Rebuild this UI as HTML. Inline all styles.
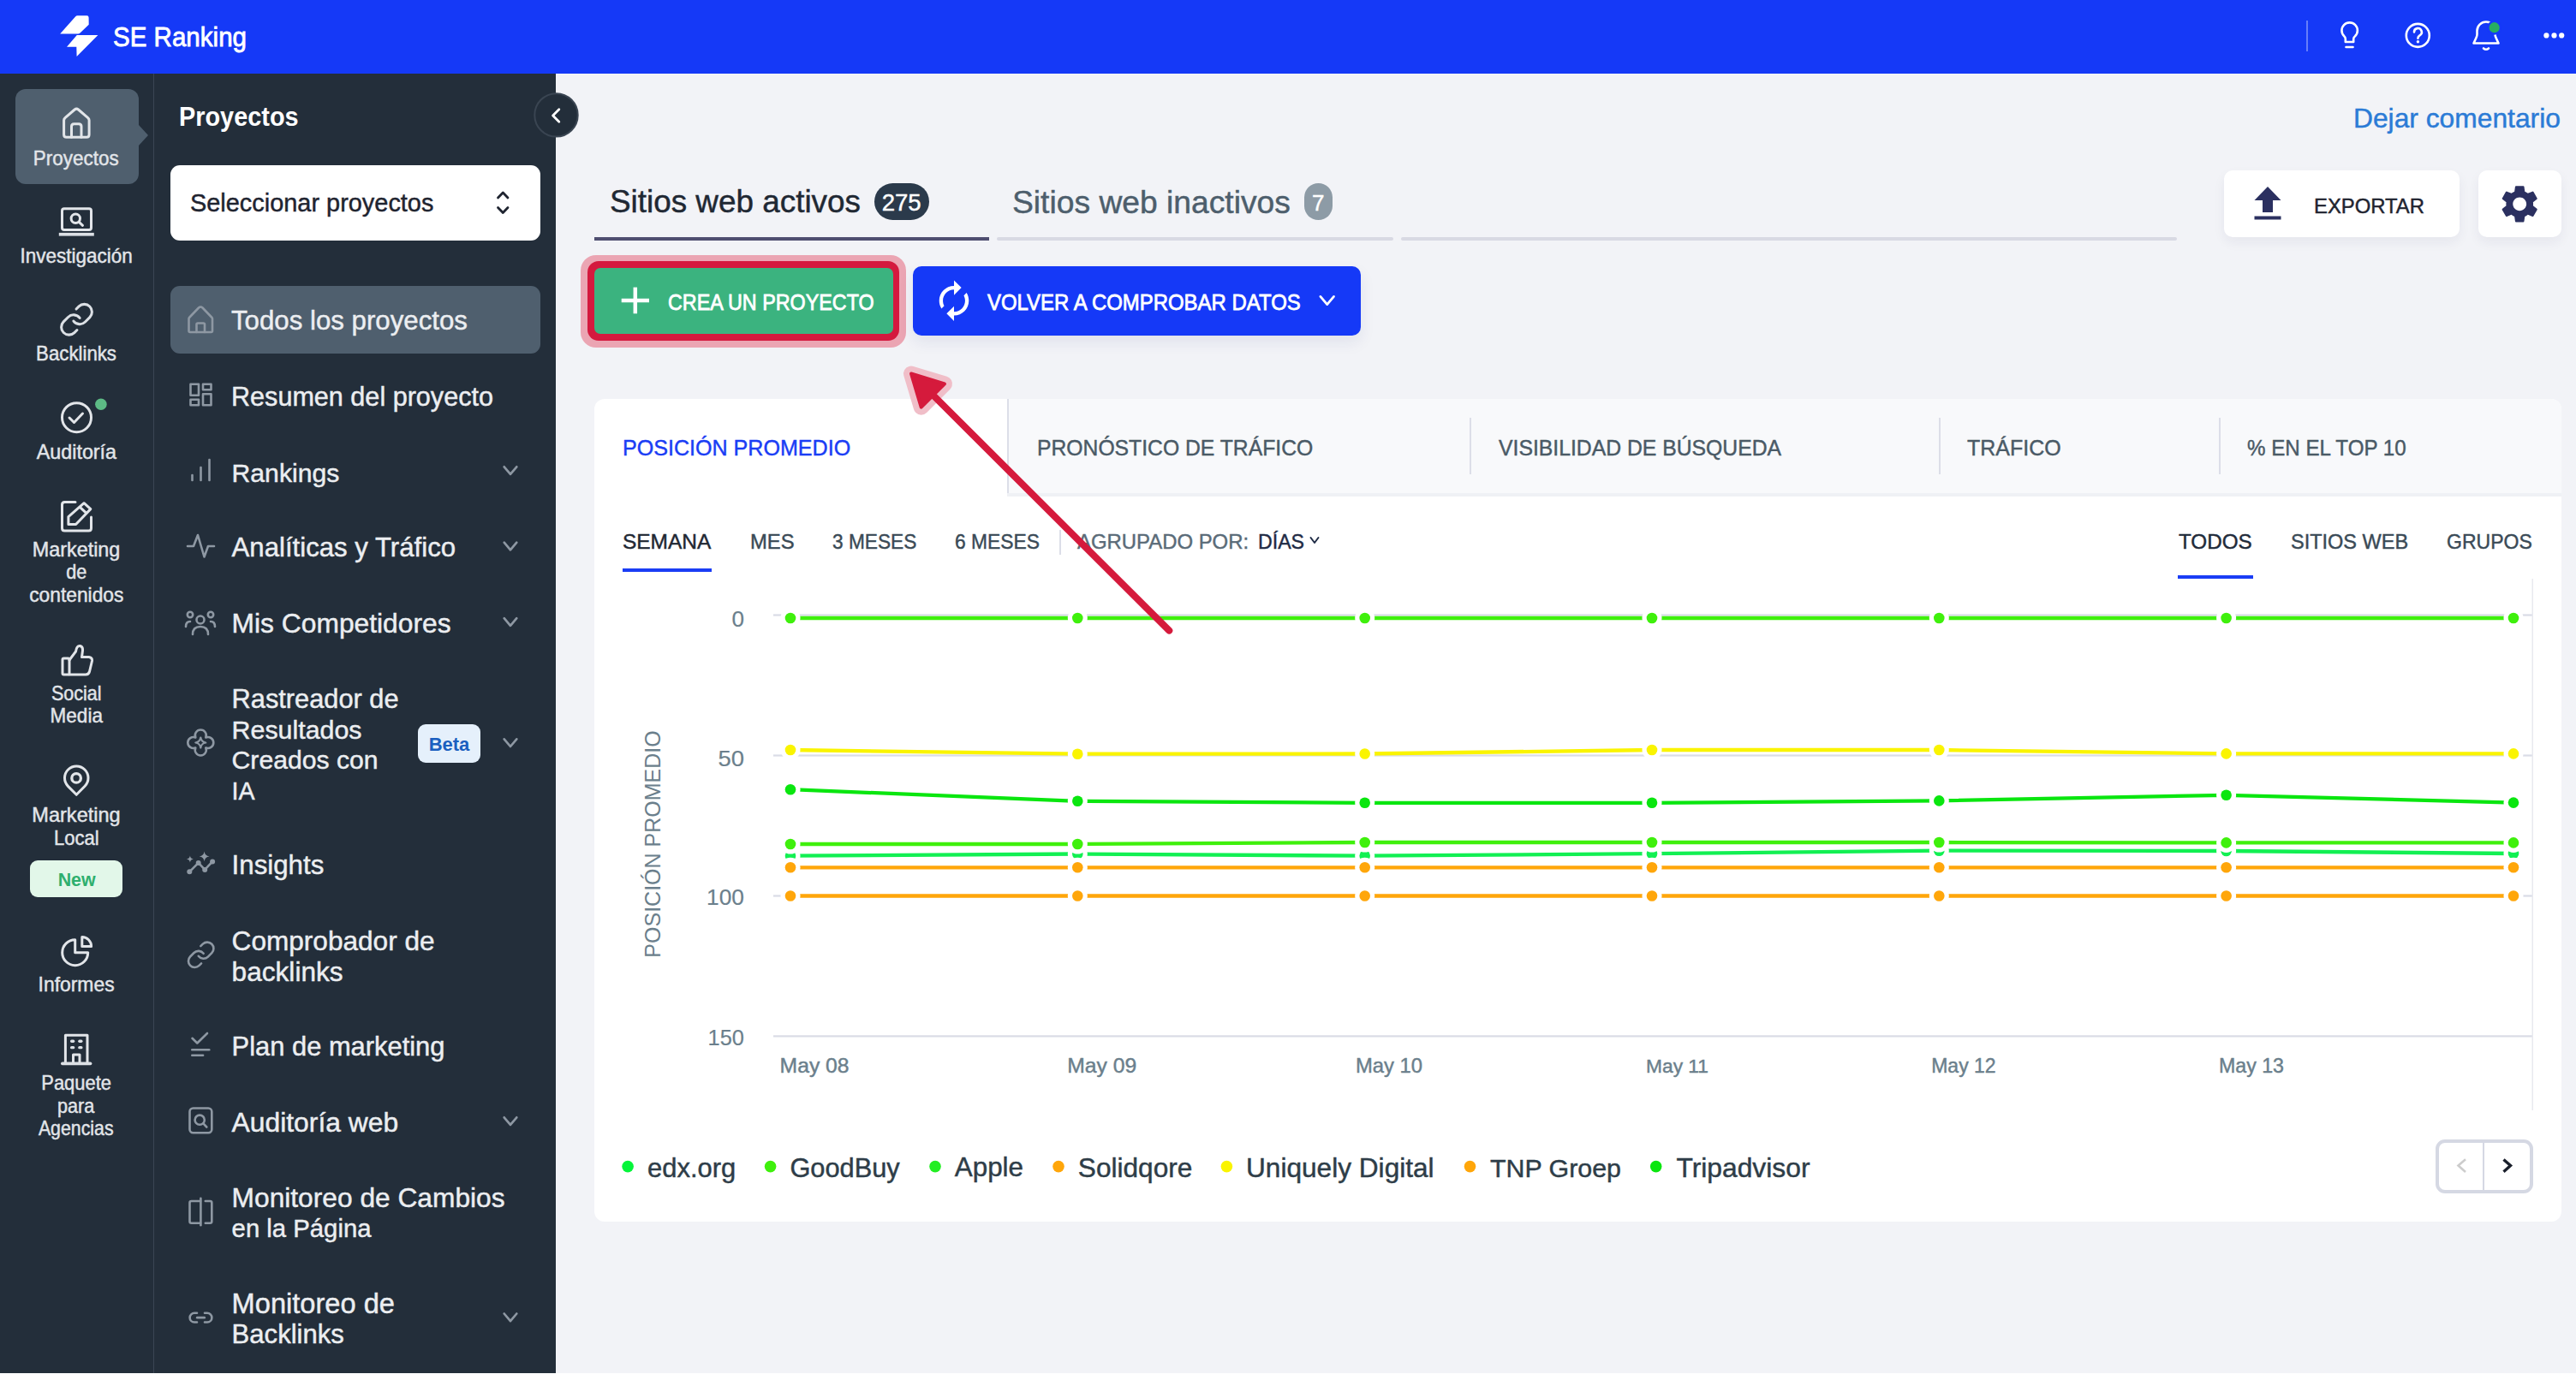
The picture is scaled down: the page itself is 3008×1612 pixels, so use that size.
<!DOCTYPE html>
<html><head><meta charset="utf-8"><style>
html,body{margin:0;padding:0;width:3008px;height:1612px;overflow:hidden;background:#fff}
body{position:relative;font-family:'Liberation Sans', sans-serif}
</style></head><body>
<div style="position:absolute;left:0px;top:0px;width:3008px;height:1612px;background:#ffffff;"></div><div style="position:absolute;left:649px;top:86px;width:2359px;height:1518px;background:#F2F3F7;"></div><div style="position:absolute;left:0px;top:0px;width:3008px;height:86px;background:#1539F7;"></div><div style="position:absolute;left:0px;top:86px;width:649px;height:1518px;background:#232E3A;"></div><div style="position:absolute;left:179px;top:86px;width:1px;height:1518px;background:#3A4654;"></div><div style="position:absolute;left:2693px;top:24px;width:2px;height:36px;background:rgba(255,255,255,0.35);"></div><div style="position:absolute;left:18px;top:104px;width:144px;height:111px;background:#4F5F6E;border-radius:12px"></div><div style="position:absolute;left:35px;top:1005px;width:108px;height:43px;background:#E2F7E9;border-radius:9px"></div><div style="position:absolute;left:199px;top:193px;width:432px;height:88px;background:#fff;border-radius:11px"></div><div style="position:absolute;left:199px;top:333.5px;width:432px;height:79.5px;background:#4F5F6E;border-radius:11px"></div><div style="position:absolute;left:488px;top:846px;width:73px;height:44.6px;background:#E5F0FB;border-radius:9px"></div><div style="position:absolute;left:1020.7px;top:214px;width:64px;height:42.8px;background:#2B3A4B;border-radius:22px"></div><div style="position:absolute;left:1522.7px;top:214px;width:33px;height:43px;background:#8D9BA6;border-radius:16.5px"></div><div style="position:absolute;left:693.5px;top:277px;width:461.9000000000001px;height:4px;background:#4F4E70;"></div><div style="position:absolute;left:1164px;top:277px;width:463px;height:4px;background:#D8D9E3;border-radius:2px;"></div><div style="position:absolute;left:1636px;top:277px;width:905.8000000000002px;height:4px;background:#D8D9E3;border-radius:2px;"></div><div style="position:absolute;left:2596.5px;top:199px;width:275.5px;height:78.3px;background:#fff;border-radius:10px;box-shadow:0 6px 14px rgba(30,40,80,0.06)"></div><div style="position:absolute;left:2893.8px;top:199px;width:97.2px;height:78.3px;background:#fff;border-radius:10px;box-shadow:0 6px 14px rgba(30,40,80,0.06)"></div><div style="position:absolute;left:678px;top:297.6px;width:379.6px;height:108.4px;background:#EBA5B3;border-radius:18px"></div><div style="position:absolute;left:685.7px;top:305px;width:364.1px;height:92.7px;background:#D4193E;border-radius:13px"></div><div style="position:absolute;left:693.5px;top:313px;width:349.4px;height:77px;background:#3BB37F;border-radius:7px"></div><div style="position:absolute;left:1066px;top:311px;width:522.7px;height:80.5px;background:#1539F7;border-radius:10px;box-shadow:0 8px 18px rgba(20,40,120,0.08)"></div><div style="position:absolute;left:694px;top:466px;width:2297px;height:960.7px;background:#fff;border-radius:12px;overflow:hidden"><div style="position:absolute;left:482px;top:0;width:1815px;height:110px;background:#F8F9FB;border-left:2px solid #DCDEE8"></div><div style="position:absolute;left:482px;top:110px;width:1817px;height:4px;background:#EFF1F5"></div></div><div style="position:absolute;left:1716px;top:488px;width:2px;height:65.60000000000002px;background:#DCDEE8;"></div><div style="position:absolute;left:2264.4px;top:488px;width:2.0px;height:65.60000000000002px;background:#DCDEE8;"></div><div style="position:absolute;left:2591px;top:488px;width:2px;height:65.60000000000002px;background:#DCDEE8;"></div><div style="position:absolute;left:1237.4px;top:618.6px;width:2.0px;height:29.100000000000023px;background:#DCDEE8;"></div><div style="position:absolute;left:726.8px;top:664px;width:104.0px;height:4px;background:#1A3DF5;"></div><div style="position:absolute;left:2543px;top:671.5px;width:88px;height:4.0px;background:#1A3DF5;"></div><div style="position:absolute;left:622px;top:966px;width:280px;height:40px;line-height:40px;text-align:center;transform:rotate(-90deg);font-family:'Liberation Sans', sans-serif;font-size:25px;color:#6B7F8C;white-space:pre">POSICIÓN PROMEDIO</div><div style="position:absolute;left:2843.75px;top:1330.9px;width:113.95px;height:62.9px;box-sizing:border-box;border:4px solid #D5D8E3;border-radius:11px;background:#fff"></div><div style="position:absolute;left:2898.7px;top:1334px;width:2.0px;height:56px;background:#D5D8E3;"></div>
<svg width="3008" height="1612" style="position:absolute;left:0;top:0"><rect x="903" y="717.4" width="2054" height="2.2" fill="#DADCE6"/><rect x="903" y="881.4" width="2054" height="2.2" fill="#DADCE6"/><rect x="903" y="1045.4" width="2054" height="2.2" fill="#DADCE6"/><rect x="903" y="1209.3" width="2054" height="2.2" fill="#DADCE6"/><rect x="2956.5" y="676" width="1.5" height="621" fill="#E8E9EF"/></svg>
<div style="position:absolute;left:132.20px;top:12.13px;font-size:31.54px;line-height:63.08px;color:#fff;font-weight:400;white-space:pre;-webkit-text-stroke:0.8px #fff;transform:scaleX(0.9368);transform-origin:left center;">SE Ranking</div><div style="position:absolute;left:36.44px;top:161.60px;font-size:23.69px;line-height:47.38px;color:#E2E5E9;font-weight:400;white-space:pre;-webkit-text-stroke:0.45px #E2E5E9;transform:scaleX(0.9485);transform-origin:center center;">Proyectos</div><div style="position:absolute;left:19.97px;top:275.60px;font-size:23.69px;line-height:47.38px;color:#E2E5E9;font-weight:400;white-space:pre;-webkit-text-stroke:0.45px #E2E5E9;transform:scaleX(0.9503);transform-origin:center center;">Investigación</div><div style="position:absolute;left:39.07px;top:389.60px;font-size:23.69px;line-height:47.38px;color:#E2E5E9;font-weight:400;white-space:pre;-webkit-text-stroke:0.45px #E2E5E9;transform:scaleX(0.9384);transform-origin:center center;">Backlinks</div><div style="position:absolute;left:41.69px;top:504.50px;font-size:23.69px;line-height:47.38px;color:#E2E5E9;font-weight:400;white-space:pre;-webkit-text-stroke:0.45px #E2E5E9;transform:scaleX(0.9840);transform-origin:center center;">Auditoría</div><div style="position:absolute;left:37.09px;top:618.70px;font-size:23.69px;line-height:47.38px;color:#E2E5E9;font-weight:400;white-space:pre;-webkit-text-stroke:0.45px #E2E5E9;transform:scaleX(0.9874);transform-origin:center center;">Marketing</div><div style="position:absolute;left:75.92px;top:645.20px;font-size:23.69px;line-height:47.38px;color:#E2E5E9;font-weight:400;white-space:pre;-webkit-text-stroke:0.45px #E2E5E9;transform:scaleX(0.9143);transform-origin:center center;">de</div><div style="position:absolute;left:31.81px;top:671.70px;font-size:23.69px;line-height:47.38px;color:#E2E5E9;font-weight:400;white-space:pre;-webkit-text-stroke:0.45px #E2E5E9;transform:scaleX(0.9618);transform-origin:center center;">contenidos</div><div style="position:absolute;left:56.83px;top:786.90px;font-size:23.69px;line-height:47.38px;color:#E2E5E9;font-weight:400;white-space:pre;-webkit-text-stroke:0.45px #E2E5E9;transform:scaleX(0.9096);transform-origin:center center;">Social</div><div style="position:absolute;left:56.83px;top:813.40px;font-size:23.69px;line-height:47.38px;color:#E2E5E9;font-weight:400;white-space:pre;-webkit-text-stroke:0.45px #E2E5E9;transform:scaleX(0.9499);transform-origin:center center;">Media</div><div style="position:absolute;left:37.09px;top:929.10px;font-size:23.69px;line-height:47.38px;color:#E2E5E9;font-weight:400;white-space:pre;-webkit-text-stroke:0.45px #E2E5E9;transform:scaleX(0.9931);transform-origin:center center;">Marketing</div><div style="position:absolute;left:60.78px;top:955.60px;font-size:23.69px;line-height:47.38px;color:#E2E5E9;font-weight:400;white-space:pre;-webkit-text-stroke:0.45px #E2E5E9;transform:scaleX(0.9304);transform-origin:center center;">Local</div><div style="position:absolute;left:43.02px;top:1127.10px;font-size:23.69px;line-height:47.38px;color:#E2E5E9;font-weight:400;white-space:pre;-webkit-text-stroke:0.45px #E2E5E9;transform:scaleX(0.9658);transform-origin:center center;">Informes</div><div style="position:absolute;left:44.97px;top:1242.10px;font-size:23.69px;line-height:47.38px;color:#E2E5E9;font-weight:400;white-space:pre;-webkit-text-stroke:0.45px #E2E5E9;transform:scaleX(0.9258);transform-origin:center center;">Paquete</div><div style="position:absolute;left:65.39px;top:1268.60px;font-size:23.69px;line-height:47.38px;color:#E2E5E9;font-weight:400;white-space:pre;-webkit-text-stroke:0.45px #E2E5E9;transform:scaleX(0.9131);transform-origin:center center;">para</div><div style="position:absolute;left:40.37px;top:1295.10px;font-size:23.69px;line-height:47.38px;color:#E2E5E9;font-weight:400;white-space:pre;-webkit-text-stroke:0.45px #E2E5E9;transform:scaleX(0.8999);transform-origin:center center;">Agencias</div><div style="position:absolute;left:67.70px;top:1007.20px;font-size:21.39px;line-height:42.78px;color:#2EAF6E;font-weight:700;white-space:pre;">New</div><div style="position:absolute;left:209.30px;top:104.35px;font-size:32.27px;line-height:64.53px;color:#ffffff;font-weight:700;white-space:pre;transform:scaleX(0.8945);transform-origin:left center;">Proyectos</div><div style="position:absolute;left:222.00px;top:209.06px;font-size:28.92px;line-height:57.83px;color:#1F2430;font-weight:400;white-space:pre;-webkit-text-stroke:0.45px #1F2430;">Seleccionar proyectos</div><div style="position:absolute;left:270.00px;top:343.95px;font-size:31.23px;line-height:62.46px;color:#ECEEF1;font-weight:400;white-space:pre;-webkit-text-stroke:0.45px #ECEEF1;">Todos los proyectos</div><div style="position:absolute;left:270.00px;top:432.82px;font-size:30.58px;line-height:61.17px;color:#ECEEF1;font-weight:400;white-space:pre;-webkit-text-stroke:0.45px #ECEEF1;">Resumen del proyecto</div><div style="position:absolute;left:270.60px;top:522.70px;font-size:30.15px;line-height:60.30px;color:#ECEEF1;font-weight:400;white-space:pre;-webkit-text-stroke:0.45px #ECEEF1;">Rankings</div><div style="position:absolute;left:270.60px;top:609.43px;font-size:31.17px;line-height:62.34px;color:#ECEEF1;font-weight:400;white-space:pre;-webkit-text-stroke:0.45px #ECEEF1;">Analíticas y Tráfico</div><div style="position:absolute;left:270.60px;top:697.22px;font-size:31.77px;line-height:63.54px;color:#ECEEF1;font-weight:400;white-space:pre;-webkit-text-stroke:0.45px #ECEEF1;">Mis Competidores</div><div style="position:absolute;left:270.60px;top:786.37px;font-size:30.77px;line-height:61.54px;color:#ECEEF1;font-weight:400;white-space:pre;-webkit-text-stroke:0.45px #ECEEF1;">Rastreador de</div><div style="position:absolute;left:270.60px;top:822.29px;font-size:30.38px;line-height:60.76px;color:#ECEEF1;font-weight:400;white-space:pre;-webkit-text-stroke:0.45px #ECEEF1;">Resultados</div><div style="position:absolute;left:270.60px;top:857.99px;font-size:30.16px;line-height:60.32px;color:#ECEEF1;font-weight:400;white-space:pre;-webkit-text-stroke:0.45px #ECEEF1;">Creados con</div><div style="position:absolute;left:270.60px;top:895.54px;font-size:28.57px;line-height:57.13px;color:#ECEEF1;font-weight:400;white-space:pre;-webkit-text-stroke:0.45px #ECEEF1;">IA</div><div style="position:absolute;left:500.66px;top:848.38px;font-size:22.00px;line-height:44.00px;color:#1B5FC0;font-weight:700;white-space:pre;">Beta</div><div style="position:absolute;left:270.60px;top:980.33px;font-size:31.25px;line-height:62.49px;color:#ECEEF1;font-weight:400;white-space:pre;-webkit-text-stroke:0.45px #ECEEF1;">Insights</div><div style="position:absolute;left:270.60px;top:1068.48px;font-size:31.58px;line-height:63.16px;color:#ECEEF1;font-weight:400;white-space:pre;-webkit-text-stroke:0.45px #ECEEF1;">Comprobador de</div><div style="position:absolute;left:270.60px;top:1103.64px;font-size:31.61px;line-height:63.21px;color:#ECEEF1;font-weight:400;white-space:pre;-webkit-text-stroke:0.45px #ECEEF1;">backlinks</div><div style="position:absolute;left:270.60px;top:1192.40px;font-size:30.89px;line-height:61.78px;color:#ECEEF1;font-weight:400;white-space:pre;-webkit-text-stroke:0.45px #ECEEF1;">Plan de marketing</div><div style="position:absolute;left:270.60px;top:1279.55px;font-size:31.82px;line-height:63.65px;color:#ECEEF1;font-weight:400;white-space:pre;-webkit-text-stroke:0.45px #ECEEF1;">Auditoría web</div><div style="position:absolute;left:270.60px;top:1368.11px;font-size:31.71px;line-height:63.41px;color:#ECEEF1;font-weight:400;white-space:pre;-webkit-text-stroke:0.45px #ECEEF1;">Monitoreo de Cambios</div><div style="position:absolute;left:270.60px;top:1405.83px;font-size:29.31px;line-height:58.63px;color:#ECEEF1;font-weight:400;white-space:pre;-webkit-text-stroke:0.45px #ECEEF1;">en la Página</div><div style="position:absolute;left:270.60px;top:1490.08px;font-size:32.62px;line-height:65.24px;color:#ECEEF1;font-weight:400;white-space:pre;-webkit-text-stroke:0.45px #ECEEF1;">Monitoreo de</div><div style="position:absolute;left:270.60px;top:1527.64px;font-size:31.09px;line-height:62.17px;color:#ECEEF1;font-weight:400;white-space:pre;-webkit-text-stroke:0.45px #ECEEF1;">Backlinks</div><div style="position:absolute;left:2748.00px;top:107.20px;font-size:31.78px;line-height:63.56px;color:#2B7BD6;font-weight:400;white-space:pre;-webkit-text-stroke:0.45px #2B7BD6;">Dejar comentario</div><div style="position:absolute;left:712.00px;top:199.36px;font-size:36.87px;line-height:73.73px;color:#1F2833;font-weight:400;white-space:pre;-webkit-text-stroke:0.45px #1F2833;">Sitios web activos</div><div style="position:absolute;left:1029.70px;top:209.39px;font-size:27.56px;line-height:55.13px;color:#ffffff;font-weight:400;white-space:pre;-webkit-text-stroke:0.45px #ffffff;">275</div><div style="position:absolute;left:1182.00px;top:198.85px;font-size:37.24px;line-height:74.49px;color:#4D5E6C;font-weight:400;white-space:pre;-webkit-text-stroke:0.45px #4D5E6C;">Sitios web inactivos</div><div style="position:absolute;left:1531.97px;top:211.49px;font-size:26.00px;line-height:52.00px;color:#ffffff;font-weight:400;white-space:pre;-webkit-text-stroke:0.45px #ffffff;">7</div><div style="position:absolute;left:2701.50px;top:217.12px;font-size:24.27px;line-height:48.55px;color:#1F2430;font-weight:400;white-space:pre;-webkit-text-stroke:0.45px #1F2430;transform:scaleX(0.9829);transform-origin:left center;">EXPORTAR</div><div style="position:absolute;left:780.00px;top:326.98px;font-size:26.45px;line-height:52.91px;color:#ffffff;font-weight:400;white-space:pre;-webkit-text-stroke:0.8px #ffffff;transform:scaleX(0.8824);transform-origin:left center;">CREA UN PROYECTO</div><div style="position:absolute;left:1152.70px;top:326.98px;font-size:26.45px;line-height:52.91px;color:#ffffff;font-weight:400;white-space:pre;-webkit-text-stroke:0.8px #ffffff;transform:scaleX(0.9052);transform-origin:left center;">VOLVER A COMPROBAR DATOS</div><div style="position:absolute;left:726.80px;top:496.97px;font-size:26.16px;line-height:52.33px;color:#1A3DF5;font-weight:400;white-space:pre;-webkit-text-stroke:0.45px #1A3DF5;transform:scaleX(0.9590);transform-origin:left center;">POSICIÓN PROMEDIO</div><div style="position:absolute;left:1210.50px;top:496.97px;font-size:26.16px;line-height:52.33px;color:#4A5A66;font-weight:400;white-space:pre;-webkit-text-stroke:0.45px #4A5A66;transform:scaleX(0.9448);transform-origin:left center;">PRONÓSTICO DE TRÁFICO</div><div style="position:absolute;left:1750.00px;top:496.97px;font-size:26.16px;line-height:52.33px;color:#4A5A66;font-weight:400;white-space:pre;-webkit-text-stroke:0.45px #4A5A66;transform:scaleX(0.9460);transform-origin:left center;">VISIBILIDAD DE BÚSQUEDA</div><div style="position:absolute;left:2297.40px;top:496.97px;font-size:26.16px;line-height:52.33px;color:#4A5A66;font-weight:400;white-space:pre;-webkit-text-stroke:0.45px #4A5A66;transform:scaleX(0.9547);transform-origin:left center;">TRÁFICO</div><div style="position:absolute;left:2624.00px;top:496.97px;font-size:26.16px;line-height:52.33px;color:#4A5A66;font-weight:400;white-space:pre;-webkit-text-stroke:0.45px #4A5A66;transform:scaleX(0.9232);transform-origin:left center;">% EN EL TOP 10</div><div style="position:absolute;left:726.80px;top:608.43px;font-size:24.71px;line-height:49.42px;color:#1F2833;font-weight:400;white-space:pre;-webkit-text-stroke:0.45px #1F2833;transform:scaleX(0.9898);transform-origin:left center;">SEMANA</div><div style="position:absolute;left:875.50px;top:608.43px;font-size:24.71px;line-height:49.42px;color:#3A4A56;font-weight:400;white-space:pre;-webkit-text-stroke:0.45px #3A4A56;transform:scaleX(0.9626);transform-origin:left center;">MES</div><div style="position:absolute;left:971.70px;top:608.43px;font-size:24.71px;line-height:49.42px;color:#3A4A56;font-weight:400;white-space:pre;-webkit-text-stroke:0.45px #3A4A56;transform:scaleX(0.9184);transform-origin:left center;">3 MESES</div><div style="position:absolute;left:1115.40px;top:608.43px;font-size:24.71px;line-height:49.42px;color:#3A4A56;font-weight:400;white-space:pre;-webkit-text-stroke:0.45px #3A4A56;transform:scaleX(0.9240);transform-origin:left center;">6 MESES</div><div style="position:absolute;left:1257.80px;top:608.43px;font-size:24.71px;line-height:49.42px;color:#5A6B78;font-weight:400;white-space:pre;-webkit-text-stroke:0.45px #5A6B78;transform:scaleX(0.9676);transform-origin:left center;">AGRUPADO POR:</div><div style="position:absolute;left:1468.60px;top:608.43px;font-size:24.71px;line-height:49.42px;color:#1F2B45;font-weight:400;white-space:pre;-webkit-text-stroke:0.45px #1F2B45;transform:scaleX(0.9371);transform-origin:left center;">DÍAS</div><div style="position:absolute;left:2544.00px;top:608.13px;font-size:24.71px;line-height:49.42px;color:#1F2B3A;font-weight:400;white-space:pre;-webkit-text-stroke:0.45px #1F2B3A;transform:scaleX(0.9812);transform-origin:left center;">TODOS</div><div style="position:absolute;left:2675.00px;top:608.13px;font-size:24.71px;line-height:49.42px;color:#3A4A56;font-weight:400;white-space:pre;-webkit-text-stroke:0.45px #3A4A56;transform:scaleX(0.9512);transform-origin:left center;">SITIOS WEB</div><div style="position:absolute;left:2857.00px;top:608.13px;font-size:24.71px;line-height:49.42px;color:#3A4A56;font-weight:400;white-space:pre;-webkit-text-stroke:0.45px #3A4A56;transform:scaleX(0.9318);transform-origin:left center;">GRUPOS</div><div style="position:absolute;left:854.72px;top:697.64px;font-size:25.15px;line-height:50.29px;color:#6B7F8C;font-weight:400;white-space:pre;-webkit-text-stroke:0.2px #6B7F8C;transform:scaleX(1.0369);transform-origin:right center;">0</div><div style="position:absolute;left:840.75px;top:860.94px;font-size:25.15px;line-height:50.29px;color:#6B7F8C;font-weight:400;white-space:pre;-webkit-text-stroke:0.2px #6B7F8C;transform:scaleX(1.0911);transform-origin:right center;">50</div><div style="position:absolute;left:826.78px;top:1023.44px;font-size:25.15px;line-height:50.29px;color:#6B7F8C;font-weight:400;white-space:pre;-webkit-text-stroke:0.2px #6B7F8C;transform:scaleX(1.0448);transform-origin:right center;">100</div><div style="position:absolute;left:826.78px;top:1187.44px;font-size:25.15px;line-height:50.29px;color:#6B7F8C;font-weight:400;white-space:pre;-webkit-text-stroke:0.2px #6B7F8C;transform:scaleX(1.0090);transform-origin:right center;">150</div><div style="position:absolute;left:910.60px;top:1220.04px;font-size:24.70px;line-height:49.40px;color:#6B7F8C;font-weight:400;white-space:pre;-webkit-text-stroke:0.45px #6B7F8C;">May 08</div><div style="position:absolute;left:1246.20px;top:1220.04px;font-size:24.70px;line-height:49.40px;color:#6B7F8C;font-weight:400;white-space:pre;-webkit-text-stroke:0.45px #6B7F8C;">May 09</div><div style="position:absolute;left:1583.00px;top:1221.27px;font-size:23.79px;line-height:47.57px;color:#6B7F8C;font-weight:400;white-space:pre;-webkit-text-stroke:0.45px #6B7F8C;">May 10</div><div style="position:absolute;left:1922.00px;top:1222.63px;font-size:22.77px;line-height:45.55px;color:#6B7F8C;font-weight:400;white-space:pre;-webkit-text-stroke:0.45px #6B7F8C;">May 11</div><div style="position:absolute;left:2255.20px;top:1222.30px;font-size:23.02px;line-height:46.05px;color:#6B7F8C;font-weight:400;white-space:pre;-webkit-text-stroke:0.45px #6B7F8C;">May 12</div><div style="position:absolute;left:2591.00px;top:1222.09px;font-size:23.18px;line-height:46.35px;color:#6B7F8C;font-weight:400;white-space:pre;-webkit-text-stroke:0.45px #6B7F8C;">May 13</div><div style="position:absolute;left:756.00px;top:1333.84px;font-size:30.94px;line-height:61.88px;color:#2E3D48;font-weight:400;white-space:pre;-webkit-text-stroke:0.45px #2E3D48;">edx.org</div><div style="position:absolute;left:922.40px;top:1334.07px;font-size:30.77px;line-height:61.54px;color:#2E3D48;font-weight:400;white-space:pre;-webkit-text-stroke:0.45px #2E3D48;">GoodBuy</div><div style="position:absolute;left:1114.80px;top:1333.28px;font-size:31.35px;line-height:62.71px;color:#2E3D48;font-weight:400;white-space:pre;-webkit-text-stroke:0.45px #2E3D48;">Apple</div><div style="position:absolute;left:1258.80px;top:1332.92px;font-size:31.62px;line-height:63.24px;color:#2E3D48;font-weight:400;white-space:pre;-webkit-text-stroke:0.45px #2E3D48;">Solidqore</div><div style="position:absolute;left:1455.00px;top:1332.92px;font-size:31.62px;line-height:63.24px;color:#2E3D48;font-weight:400;white-space:pre;-webkit-text-stroke:0.45px #2E3D48;">Uniquely Digital</div><div style="position:absolute;left:1740.00px;top:1334.62px;font-size:30.36px;line-height:60.72px;color:#2E3D48;font-weight:400;white-space:pre;-webkit-text-stroke:0.45px #2E3D48;">TNP Groep</div><div style="position:absolute;left:1957.40px;top:1332.68px;font-size:31.80px;line-height:63.60px;color:#2E3D48;font-weight:400;white-space:pre;-webkit-text-stroke:0.45px #2E3D48;">Tripadvisor</div>
<svg width="3008" height="1612" style="position:absolute;left:0;top:0"><path d="M70.2,39.6 L88,19.5 Q89,18.3 90.5,18.3 L101.5,18.3 Q103.6,18.3 103.6,20.4 L103.7,28.7 L93.5,38.5 Q92.5,39.6 91,39.6 Z" fill="#fff"/><path d="M78,54.7 L89.8,41.1 L114.4,41.1 L89.6,66 L89.3,54.7 Z" fill="#fff"/><g fill="none" stroke="#fff" stroke-width="2.6" stroke-linecap="round" stroke-linejoin="round"><path d="M2738.8,49 L2738.8,45.5 Q2738.8,43.5 2737.3,42.2 A9.2,9.2 0 1 1 2750,42.2 Q2748.2,43.5 2748.2,45.5 L2748.2,49 Z"/><path d="M2739.5,55 L2747.5,55"/></g><g fill="none" stroke="#fff" stroke-width="2.6" stroke-linecap="round"><circle cx="2823.3" cy="41.4" r="13.5"/><path d="M2819,37.5 A4.4,4.4 0 1 1 2825.5,41.3 Q2823.4,42.6 2823.4,44.8"/></g><circle cx="2823.4" cy="48.8" r="1.7" fill="#fff"/><g fill="none" stroke="#fff" stroke-width="2.6" stroke-linecap="round" stroke-linejoin="round"><path d="M2888.5,50.5 L2917.5,50.5 L2914.5,44 Q2913.5,42 2913.5,40 L2913.5,36 A10.5,10.5 0 0 0 2892.5,36 L2892.5,40 Q2892.5,42 2891.5,44 Z"/><path d="M2900,56.5 Q2903,59 2906,56.5"/></g><circle cx="2912.7" cy="32.2" r="7.3" fill="#27AE60" stroke="#1539F7" stroke-width="2.4"/><circle cx="2973.4" cy="41.4" r="3.1" fill="#fff"/><circle cx="2982.5" cy="41.4" r="3.1" fill="#fff"/><circle cx="2991.2" cy="41.4" r="3.1" fill="#fff"/><path d="M162,146 L173,158 L162,170 Z" fill="#4F5F6E"/><g fill="none" stroke="#E2E5E9" stroke-width="3" stroke-linecap="round" stroke-linejoin="round" stroke-width="3.1"><path d="M74.6,140.5 Q74.6,138.8 76,137.7 L87.2,128 Q89.35,126.3 91.5,128 L102.7,137.7 Q104.1,138.8 104.1,140.5 L104.1,157.3 Q104.1,160.3 101.1,160.3 L77.6,160.3 Q74.6,160.3 74.6,157.3 Z"/><path d="M83.5,160.3 L83.5,147.7 Q83.5,144.7 86.5,144.7 L92,144.7 Q95,144.7 95,147.7 L95,160.3"/></g><g fill="none" stroke="#E2E5E9" stroke-width="3" stroke-linecap="round" stroke-linejoin="round"><rect x="72.5" y="243.8" width="34" height="24.7" rx="2.5"/><circle cx="88.3" cy="255.3" r="5.2"/><path d="M92.3,259.3 L96.5,263.3"/></g><rect x="68.8" y="271.9" width="41" height="3.7" fill="#DCE0E5"/><g transform="translate(89.5,373.25) scale(1.8) translate(-12,-12)" fill="none" stroke="#DCE0E5" stroke-width="1.7" stroke-linecap="round" stroke-linejoin="round"><path d="M10 13a5 5 0 0 0 7.54.54l3-3a5 5 0 0 0-7.07-7.07l-1.72 1.71"/><path d="M14 11a5 5 0 0 0-7.54-.54l-3 3a5 5 0 0 0 7.07 7.07l1.71-1.71"/></g><g fill="none" stroke="#E2E5E9" stroke-width="3" stroke-linecap="round" stroke-linejoin="round"><circle cx="89.5" cy="487.7" r="17"/><path d="M81,488 L86.5,493.5 L96.5,483"/></g><circle cx="117.9" cy="472.3" r="6.8" fill="#5DBB85"/><g fill="none" stroke="#E2E5E9" stroke-width="3" stroke-linecap="round" stroke-linejoin="round"><path d="M88,586.5 L75.5,586.5 Q72.5,586.5 72.5,589.5 L72.5,617 Q72.5,620 75.5,620 L103.5,620 Q106.5,620 106.5,617 L106.5,604"/><path d="M79.9,603.6 L79.9,612.5 L88.6,612.5 L105.8,594.6 L98.1,587.7 Z"/><path d="M93.3,592.3 L100.8,599.4"/></g><g fill="none" stroke="#E2E5E9" stroke-width="3" stroke-linecap="round" stroke-linejoin="round"><rect x="73" y="769" width="8" height="19" rx="1.5"/><path d="M81,771 L88.5,761 Q89.5,754 93.5,754.5 Q97,755.5 96.5,760 L95.5,767.5 L104,767.5 Q108,768 107.5,772 L104.5,784.5 Q103.5,788 100,788 L81,788"/></g><g fill="none" stroke="#E2E5E9" stroke-width="3" stroke-linecap="round" stroke-linejoin="round"><path d="M89.25,928.3 L79.37,918.32 A13.75,13.75 0 1 1 99.13,918.32 Z"/><circle cx="89.1" cy="908.9" r="5.3" stroke-width="3.3"/></g><g fill="none" stroke="#E2E5E9" stroke-width="3" stroke-linecap="round" stroke-linejoin="round"><path d="M87.7,1097.7 A15,15 0 1 0 102.7,1112.7 L87.7,1112.7 Z"/><path d="M95.8,1105.4 L95.8,1094.6 A10.8,10.8 0 0 1 106.6,1105.4 Z"/></g><g fill="none" stroke="#E2E5E9" stroke-width="3" stroke-linecap="round" stroke-linejoin="round" stroke-width="3.3"><path d="M76.4,1241 L76.4,1209.3 L102,1209.3 L102,1241"/><path d="M85.5,1241 L85.5,1232 L93,1232 L93,1241"/></g><rect x="71" y="1240.6" width="36.4" height="3.6" rx="1.8" fill="#DCE0E5"/><g fill="#DCE0E5"><rect x="82" y="1214.6" width="5.3" height="3.3" rx="1.6"/><rect x="91.2" y="1214.6" width="5.3" height="3.3" rx="1.6"/><rect x="82" y="1222" width="5.3" height="3.3" rx="1.6"/><rect x="91.2" y="1222" width="5.3" height="3.3" rx="1.6"/></g><g fill="none" stroke="#1F2430" stroke-width="2.8" stroke-linecap="round" stroke-linejoin="round"><path d="M581.5,231 L587.3,225 L593,231"/><path d="M581.5,242.5 L587.3,248.5 L593,242.5"/></g><circle cx="649.5" cy="134.4" r="25.2" fill="#232E3A" stroke="#3A4552" stroke-width="2"/><path d="M652.8,127.8 L645.6,135 L652.8,142.2" fill="none" stroke="#fff" stroke-width="2.8" stroke-linecap="round" stroke-linejoin="round"/><path d="M588.7,545.3000000000001 L596,553.9 L603.3,545.3000000000001" fill="none" stroke="#8E98A3" stroke-width="2.7" stroke-linecap="round" stroke-linejoin="round"/><path d="M588.7,633.7 L596,642.3 L603.3,633.7" fill="none" stroke="#8E98A3" stroke-width="2.7" stroke-linecap="round" stroke-linejoin="round"/><path d="M588.7,722.2 L596,730.8 L603.3,722.2" fill="none" stroke="#8E98A3" stroke-width="2.7" stroke-linecap="round" stroke-linejoin="round"/><path d="M588.7,863.4000000000001 L596,872.0 L603.3,863.4000000000001" fill="none" stroke="#8E98A3" stroke-width="2.7" stroke-linecap="round" stroke-linejoin="round"/><path d="M588.7,1305.3 L596,1313.8999999999999 L603.3,1305.3" fill="none" stroke="#8E98A3" stroke-width="2.7" stroke-linecap="round" stroke-linejoin="round"/><path d="M588.7,1534.5 L596,1543.1 L603.3,1534.5" fill="none" stroke="#8E98A3" stroke-width="2.7" stroke-linecap="round" stroke-linejoin="round"/><g fill="none" stroke="#8E98A3" stroke-width="2.6" stroke-linecap="round" stroke-linejoin="round"><path d="M221,371 L232,359.5 Q234.3,357.5 236.5,359.5 L247.5,371 Q248,371.7 248,372.5 L248,386.5 Q248,388 246.5,388 L222,388 Q220.5,388 220.5,386.5 L220.5,372.5 Q220.5,371.7 221,371 Z"/><path d="M229.5,388 L229.5,379 Q229.5,377.5 231,377.5 L237.5,377.5 Q239,377.5 239,379 L239,388"/></g><g fill="none" stroke="#8E98A3" stroke-width="2.6" stroke-linecap="round" stroke-linejoin="round"><rect x="222.5" y="448.8" width="9.5" height="13" /><rect x="237" y="448.8" width="9.5" height="6.5"/><rect x="222.5" y="466.8" width="9.5" height="6.5"/><rect x="237" y="460.3" width="9.5" height="13"/></g><g fill="none" stroke="#8E98A3" stroke-width="2.6" stroke-linecap="round" stroke-linejoin="round"><path d="M224.5,561 L224.5,555"/><path d="M234.5,561 L234.5,546"/><path d="M244.5,561 L244.5,537"/></g><g fill="none" stroke="#8E98A3" stroke-width="2.6" stroke-linecap="round" stroke-linejoin="round"><path d="M219,638 L226,638 L231,625 L238.5,650.5 L243,638 L250,638"/></g><g fill="none" stroke="#8E98A3" stroke-width="2.6" stroke-linecap="round" stroke-linejoin="round"><circle cx="234" cy="724" r="4.5"/><path d="M225,741 Q225,732 234,732 Q243,732 243,741"/><circle cx="222" cy="718" r="3.2"/><circle cx="246" cy="718" r="3.2"/><path d="M217,732 Q217,726 222,726"/><path d="M251,732 Q251,726 246,726"/></g><g fill="none" stroke="#8E98A3" stroke-width="2.6" stroke-linecap="round" stroke-linejoin="round"><path d="M228.30,861.50 A6.5,6.5 0 1 1 240.30,861.50 A6.5,6.5 0 1 1 240.30,873.50 A6.5,6.5 0 1 1 228.30,873.50 A6.5,6.5 0 1 1 228.30,861.50 Z"/><path d="M234.3,861.5 Q235.10000000000002,866.7 240.3,867.5 Q235.10000000000002,868.3 234.3,873.5 Q233.5,868.3 228.3,867.5 Q233.5,866.7 234.3,861.5 Z" stroke-width="2.2"/></g><g fill="none" stroke="#8E98A3" stroke-width="2.6" stroke-linecap="round" stroke-linejoin="round"><path d="M221.3,1018.3 L231.7,1007.9 L239.2,1015.9 L248.1,1006.4"/></g><g fill="#8E98A3"><circle cx="221.3" cy="1018.3" r="3"/><circle cx="231.7" cy="1007.9" r="3"/><circle cx="239.2" cy="1015.9" r="3"/><circle cx="248.1" cy="1006.4" r="3"/><path d="M238.6,994.5 Q239.2,999.8 244.5,1000.4 Q239.2,1001 238.6,1006.3 Q238,1001 232.7,1000.4 Q238,999.8 238.6,994.5 Z"/><path d="M221.9,999.4 Q222.3,1003 225.9,1003.4 Q222.3,1003.8 221.9,1007.4 Q221.5,1003.8 217.9,1003.4 Q221.5,1003 221.9,999.4 Z"/></g><g transform="translate(234.7,1115.3) scale(1.48) translate(-12,-12)" fill="none" stroke="#8E98A3" stroke-width="1.75" stroke-linecap="round" stroke-linejoin="round"><path d="M10 13a5 5 0 0 0 7.54.54l3-3a5 5 0 0 0-7.07-7.07l-1.72 1.71"/><path d="M14 11a5 5 0 0 0-7.54-.54l-3 3a5 5 0 0 0 7.07 7.07l1.71-1.71"/></g><g fill="none" stroke="#8E98A3" stroke-width="2.6" stroke-linecap="round" stroke-linejoin="round"><path d="M224.5,1212.8 L230.3,1218.5 L242,1207"/><path d="M224.3,1226.2 L244.2,1226.2"/><path d="M224.3,1232.7 L237.1,1232.7"/></g><g fill="none" stroke="#8E98A3" stroke-width="2.6" stroke-linecap="round" stroke-linejoin="round"><rect x="221.5" y="1294.5" width="25.8" height="28.8" rx="4"/><circle cx="233.2" cy="1308.2" r="5.6"/><path d="M237.4,1312.4 L241.3,1316.5"/></g><g fill="none" stroke="#8E98A3" stroke-width="2.6" stroke-linecap="round" stroke-linejoin="round"><path d="M234,1403 L223.5,1403 Q221.5,1403 221.5,1405 L221.5,1426.8 Q221.5,1428.8 223.5,1428.8 L234,1428.8"/><path d="M239.8,1403 L245.3,1403 Q247.3,1403 247.3,1405 L247.3,1426.8 Q247.3,1428.8 245.3,1428.8 L239.8,1428.8"/><path d="M234.4,1399.8 L234.4,1431.2"/></g><g fill="none" stroke="#8E98A3" stroke-width="2.6" stroke-linecap="round" stroke-linejoin="round" stroke-width="2.9"><path d="M230,1533.8 L227,1533.8 A5.35,5.35 0 0 0 227,1544.5 L230,1544.5"/><path d="M239,1533.8 L242,1533.8 A5.35,5.35 0 0 1 242,1544.5 L239,1544.5"/><path d="M230.2,1539.15 L238.8,1539.15"/></g><path d="M2648,218 L2663.5,234 L2654,234 L2654,248 L2642,248 L2642,234 L2632.5,234 Z" fill="#2B3060"/><rect x="2632.5" y="252.5" width="31" height="4" fill="#2B3060"/><path transform="translate(2942.2,238.3) scale(2.2) translate(-12,-12)" fill="#2B3060" d="M19.14 12.94c.04-.3.06-.61.06-.94 0-.32-.02-.64-.07-.94l2.03-1.58c.18-.14.23-.41.12-.61l-1.92-3.320c-.12-.22-.37-.29-.59-.22l-2.39.96c-.5-.38-1.03-.7-1.62-.94l-.36-2.54c-.04-.24-.24-.41-.48-.41h-3.84c-.24 0-.43.17-.47.41l-.36 2.54c-.59.24-1.13.57-1.62.94l-2.39-.96c-.22-.08-.47 0-.59.22L2.74 8.87c-.12.21-.08.47.12.61l2.03 1.58c-.05.3-.09.63-.09.94s.02.64.07.94l-2.03 1.58c-.18.14-.23.41-.12.61l1.92 3.32c.12.22.37.29.59.22l2.39-.96c.5.38 1.03.7 1.62.94l.36 2.54c.05.24.24.41.48.41h3.84c.24 0 .44-.17.47-.41l.36-2.54c.59-.24 1.13-.56 1.62-.94l2.39.96c.22.08.47 0 .59-.22l1.92-3.32c.12-.22.07-.47-.12-.61l-2.010-1.58zM12 15.6c-1.98 0-3.6-1.62-3.6-3.6s1.62-3.6 3.6-3.6 3.6 1.62 3.6 3.6-1.62 3.6-3.6 3.6z"/><g stroke="#fff" stroke-width="4.5" stroke-linecap="butt"><path d="M741.8,335.6 L741.8,366.3"/><path d="M725.7,351 L758,351"/></g><path transform="translate(1114,351.2) scale(-2.16,2.16) translate(-12,-12)" fill="#fff" d="M12 4V1L8 5l4 4V6c3.31 0 6 2.69 6 6 0 1.01-.25 1.97-.7 2.8l1.46 1.46C19.54 15.03 20 13.57 20 12c0-4.42-3.58-8-8-8zm0 14c-3.31 0-6-2.69-6-6 0-1.010.25-1.97.7-2.8L5.24 7.740C4.46 8.97 4 10.43 4 12c0 4.42 3.58 8 8 8v3l4-4-4-4v3z"/><path d="M1541.9,346.4 L1549.7,355.6 L1557.5,346.4" fill="none" stroke="#fff" stroke-width="2.8" stroke-linecap="round" stroke-linejoin="round"/><path d="M1530.5,628 L1535,634 L1539.5,628" fill="none" stroke="#1F2B45" stroke-width="2" stroke-linecap="round" stroke-linejoin="round"/><polyline points="923.0,999.7 1258.3,997.5 1593.7,999.7 1929.0,997.2 2264.3,993.7 2599.6,994.0 2935.0,997.0" fill="none" stroke="#12F052" stroke-width="4.3" stroke-linejoin="round"/><polyline points="923.0,722.0 1258.3,722.0 1593.7,722.0 1929.0,722.0 2264.3,722.0 2599.6,722.0 2935.0,722.0" fill="none" stroke="#3FF00C" stroke-width="4.3" stroke-linejoin="round"/><polyline points="923.0,876.0 1258.3,880.7 1593.7,880.5 1929.0,876.0 2264.3,876.0 2599.6,880.4 2935.0,880.4" fill="none" stroke="#FAF400" stroke-width="4.3" stroke-linejoin="round"/><polyline points="923.0,922.2 1258.3,935.8 1593.7,937.8 1929.0,937.8 2264.3,935.4 2599.6,928.8 2935.0,937.6" fill="none" stroke="#0AE60F" stroke-width="4.3" stroke-linejoin="round"/><polyline points="923.0,986.0 1258.3,986.0 1593.7,984.0 1929.0,984.0 2264.3,984.0 2599.6,984.4 2935.0,984.4" fill="none" stroke="#3FF00C" stroke-width="4.3" stroke-linejoin="round"/><polyline points="923.0,1013.3 1258.3,1013.3 1593.7,1013.3 1929.0,1013.3 2264.3,1013.3 2599.6,1013.3 2935.0,1013.3" fill="none" stroke="#FFA60A" stroke-width="4.3" stroke-linejoin="round"/><polyline points="923.0,1046.5 1258.3,1046.5 1593.7,1046.5 1929.0,1046.5 2264.3,1046.5 2599.6,1046.5 2935.0,1046.5" fill="none" stroke="#FFA60A" stroke-width="4.3" stroke-linejoin="round"/><circle cx="923.0" cy="999.7" r="11.5" fill="#fff"/><circle cx="923.0" cy="999.7" r="6.3" fill="#12F052"/><circle cx="1258.3" cy="997.5" r="11.5" fill="#fff"/><circle cx="1258.3" cy="997.5" r="6.3" fill="#12F052"/><circle cx="1593.7" cy="999.7" r="11.5" fill="#fff"/><circle cx="1593.7" cy="999.7" r="6.3" fill="#12F052"/><circle cx="1929.0" cy="997.2" r="11.5" fill="#fff"/><circle cx="1929.0" cy="997.2" r="6.3" fill="#12F052"/><circle cx="2264.3" cy="993.7" r="11.5" fill="#fff"/><circle cx="2264.3" cy="993.7" r="6.3" fill="#12F052"/><circle cx="2599.6" cy="994.0" r="11.5" fill="#fff"/><circle cx="2599.6" cy="994.0" r="6.3" fill="#12F052"/><circle cx="2935.0" cy="997.0" r="11.5" fill="#fff"/><circle cx="2935.0" cy="997.0" r="6.3" fill="#12F052"/><circle cx="923.0" cy="722.0" r="11.5" fill="#fff"/><circle cx="923.0" cy="722.0" r="6.3" fill="#3FF00C"/><circle cx="1258.3" cy="722.0" r="11.5" fill="#fff"/><circle cx="1258.3" cy="722.0" r="6.3" fill="#3FF00C"/><circle cx="1593.7" cy="722.0" r="11.5" fill="#fff"/><circle cx="1593.7" cy="722.0" r="6.3" fill="#3FF00C"/><circle cx="1929.0" cy="722.0" r="11.5" fill="#fff"/><circle cx="1929.0" cy="722.0" r="6.3" fill="#3FF00C"/><circle cx="2264.3" cy="722.0" r="11.5" fill="#fff"/><circle cx="2264.3" cy="722.0" r="6.3" fill="#3FF00C"/><circle cx="2599.6" cy="722.0" r="11.5" fill="#fff"/><circle cx="2599.6" cy="722.0" r="6.3" fill="#3FF00C"/><circle cx="2935.0" cy="722.0" r="11.5" fill="#fff"/><circle cx="2935.0" cy="722.0" r="6.3" fill="#3FF00C"/><circle cx="923.0" cy="876.0" r="11.5" fill="#fff"/><circle cx="923.0" cy="876.0" r="6.3" fill="#FAF400"/><circle cx="1258.3" cy="880.7" r="11.5" fill="#fff"/><circle cx="1258.3" cy="880.7" r="6.3" fill="#FAF400"/><circle cx="1593.7" cy="880.5" r="11.5" fill="#fff"/><circle cx="1593.7" cy="880.5" r="6.3" fill="#FAF400"/><circle cx="1929.0" cy="876.0" r="11.5" fill="#fff"/><circle cx="1929.0" cy="876.0" r="6.3" fill="#FAF400"/><circle cx="2264.3" cy="876.0" r="11.5" fill="#fff"/><circle cx="2264.3" cy="876.0" r="6.3" fill="#FAF400"/><circle cx="2599.6" cy="880.4" r="11.5" fill="#fff"/><circle cx="2599.6" cy="880.4" r="6.3" fill="#FAF400"/><circle cx="2935.0" cy="880.4" r="11.5" fill="#fff"/><circle cx="2935.0" cy="880.4" r="6.3" fill="#FAF400"/><circle cx="923.0" cy="922.2" r="11.5" fill="#fff"/><circle cx="923.0" cy="922.2" r="6.3" fill="#0AE60F"/><circle cx="1258.3" cy="935.8" r="11.5" fill="#fff"/><circle cx="1258.3" cy="935.8" r="6.3" fill="#0AE60F"/><circle cx="1593.7" cy="937.8" r="11.5" fill="#fff"/><circle cx="1593.7" cy="937.8" r="6.3" fill="#0AE60F"/><circle cx="1929.0" cy="937.8" r="11.5" fill="#fff"/><circle cx="1929.0" cy="937.8" r="6.3" fill="#0AE60F"/><circle cx="2264.3" cy="935.4" r="11.5" fill="#fff"/><circle cx="2264.3" cy="935.4" r="6.3" fill="#0AE60F"/><circle cx="2599.6" cy="928.8" r="11.5" fill="#fff"/><circle cx="2599.6" cy="928.8" r="6.3" fill="#0AE60F"/><circle cx="2935.0" cy="937.6" r="11.5" fill="#fff"/><circle cx="2935.0" cy="937.6" r="6.3" fill="#0AE60F"/><circle cx="923.0" cy="986.0" r="11.5" fill="#fff"/><circle cx="923.0" cy="986.0" r="6.3" fill="#3FF00C"/><circle cx="1258.3" cy="986.0" r="11.5" fill="#fff"/><circle cx="1258.3" cy="986.0" r="6.3" fill="#3FF00C"/><circle cx="1593.7" cy="984.0" r="11.5" fill="#fff"/><circle cx="1593.7" cy="984.0" r="6.3" fill="#3FF00C"/><circle cx="1929.0" cy="984.0" r="11.5" fill="#fff"/><circle cx="1929.0" cy="984.0" r="6.3" fill="#3FF00C"/><circle cx="2264.3" cy="984.0" r="11.5" fill="#fff"/><circle cx="2264.3" cy="984.0" r="6.3" fill="#3FF00C"/><circle cx="2599.6" cy="984.4" r="11.5" fill="#fff"/><circle cx="2599.6" cy="984.4" r="6.3" fill="#3FF00C"/><circle cx="2935.0" cy="984.4" r="11.5" fill="#fff"/><circle cx="2935.0" cy="984.4" r="6.3" fill="#3FF00C"/><circle cx="923.0" cy="1013.3" r="11.5" fill="#fff"/><circle cx="923.0" cy="1013.3" r="6.3" fill="#FFA60A"/><circle cx="1258.3" cy="1013.3" r="11.5" fill="#fff"/><circle cx="1258.3" cy="1013.3" r="6.3" fill="#FFA60A"/><circle cx="1593.7" cy="1013.3" r="11.5" fill="#fff"/><circle cx="1593.7" cy="1013.3" r="6.3" fill="#FFA60A"/><circle cx="1929.0" cy="1013.3" r="11.5" fill="#fff"/><circle cx="1929.0" cy="1013.3" r="6.3" fill="#FFA60A"/><circle cx="2264.3" cy="1013.3" r="11.5" fill="#fff"/><circle cx="2264.3" cy="1013.3" r="6.3" fill="#FFA60A"/><circle cx="2599.6" cy="1013.3" r="11.5" fill="#fff"/><circle cx="2599.6" cy="1013.3" r="6.3" fill="#FFA60A"/><circle cx="2935.0" cy="1013.3" r="11.5" fill="#fff"/><circle cx="2935.0" cy="1013.3" r="6.3" fill="#FFA60A"/><circle cx="923.0" cy="1046.5" r="11.5" fill="#fff"/><circle cx="923.0" cy="1046.5" r="6.3" fill="#FFA60A"/><circle cx="1258.3" cy="1046.5" r="11.5" fill="#fff"/><circle cx="1258.3" cy="1046.5" r="6.3" fill="#FFA60A"/><circle cx="1593.7" cy="1046.5" r="11.5" fill="#fff"/><circle cx="1593.7" cy="1046.5" r="6.3" fill="#FFA60A"/><circle cx="1929.0" cy="1046.5" r="11.5" fill="#fff"/><circle cx="1929.0" cy="1046.5" r="6.3" fill="#FFA60A"/><circle cx="2264.3" cy="1046.5" r="11.5" fill="#fff"/><circle cx="2264.3" cy="1046.5" r="6.3" fill="#FFA60A"/><circle cx="2599.6" cy="1046.5" r="11.5" fill="#fff"/><circle cx="2599.6" cy="1046.5" r="6.3" fill="#FFA60A"/><circle cx="2935.0" cy="1046.5" r="11.5" fill="#fff"/><circle cx="2935.0" cy="1046.5" r="6.3" fill="#FFA60A"/><circle cx="733.1" cy="1362.6" r="6.8" fill="#05F53A"/><circle cx="899.6" cy="1362.6" r="6.8" fill="#3FF00C"/><circle cx="1092" cy="1362.6" r="6.8" fill="#22EE22"/><circle cx="1236" cy="1362.6" r="6.8" fill="#FFA60A"/><circle cx="1432.4" cy="1362.6" r="6.8" fill="#FAF400"/><circle cx="1716.5" cy="1362.6" r="6.8" fill="#FFA60A"/><circle cx="1933.7" cy="1362.6" r="6.8" fill="#0AE60F"/><path d="M2879,1354.2 L2870.5,1361.6 L2879,1369" fill="none" stroke="#CCCCCC" stroke-width="2.6"/><path d="M2923.5,1354.5 L2931.5,1361.6 L2923.5,1368.7" fill="none" stroke="#1A1F2B" stroke-width="3.4"/><path d="M1064,436.5 L1103,448.3 L1075.7,475.7 Z" fill="#F0BEC8" stroke="#F0BEC8" stroke-width="18" stroke-linejoin="round"/><path d="M1085,457 L1365.3,736.6" stroke="#D51A3C" stroke-width="8" stroke-linecap="round"/><path d="M1064,436.5 L1103,448.3 L1075.7,475.7 Z" fill="#D51A3C" stroke="#D51A3C" stroke-width="4" stroke-linejoin="round"/></svg>
</body></html>
